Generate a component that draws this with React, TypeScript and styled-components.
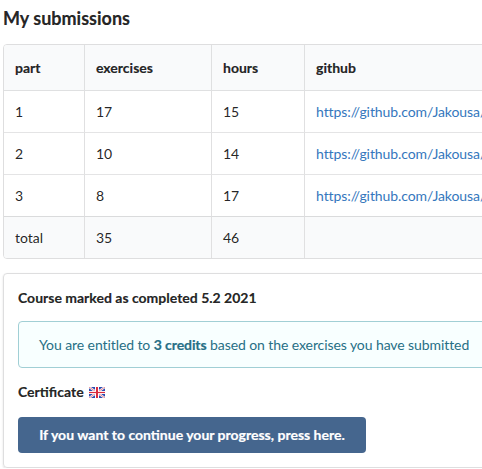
import React from 'react';
import styled, { createGlobalStyle } from 'styled-components';

const GlobalStyle = createGlobalStyle`
  *, *::before, *::after { box-sizing: border-box; }
  html, body { margin: 0; overflow: hidden; background: #fff; }
  body {
    font-family: Lato, 'Open Sans', sans-serif;
    font-size: 14px;
    line-height: 20px;
    color: rgba(0, 0, 0, 0.87);
    -webkit-font-smoothing: antialiased;
  }
  h3, h4, th, strong, button { -webkit-text-stroke: 0.2px currentColor; }
`;

const Page = styled.main`
  width: 900px;
  padding: 6px 0 0 3px;
`;

const Title = styled.h3`
  margin: 0 0 14px;
  font-size: 18px;
  font-weight: 700;
  line-height: 24px;
`;

const Table = styled.table`
  width: 860px;
  table-layout: fixed;
  border-collapse: separate;
  border-spacing: 0;
  border: 1px solid #dededf;
  border-radius: 4px;
  overflow: hidden;
`;

const Column = styled.col<{ $width?: number }>`
  width: ${({ $width }) => ($width ? `${$width}px` : 'auto')};
`;

const HeaderCell = styled.th`
  height: 46px;
  padding: 0 11px;
  text-align: left;
  font-weight: 700;
  background: #f9fafb;
  border-bottom: 1px solid #dfe0e1;
  & + & { border-left: 1px solid #dfe0e1; }
`;

const Cell = styled.td`
  height: 42px;
  padding: 0 11px;
  white-space: nowrap;
  border-top: 1px solid #e4e4e5;
  & + & { border-left: 1px solid #e0e0e1; }
`;

const Body = styled.tbody`
  tr:first-child ${Cell} {
    height: 41px;
    border-top: 0;
  }
`;

const FooterCell = styled(Cell)`
  background: #f9fafb;
  border-top-color: #dadbdc;
`;

const Link = styled.a`
  color: #3577bd;
  text-decoration: none;
  letter-spacing: -0.085px;
`;

const Segment = styled.section`
  width: 860px;
  height: 195px;
  margin-top: 14px;
  padding: 14px;
  border: 1px solid #dededf;
  border-radius: 4px;
  box-shadow: 0 1px 2px rgba(34, 36, 38, 0.15);
`;

const Heading = styled.h4`
  display: flex;
  align-items: center;
  gap: 5px;
  height: 20px;
  margin: 0;
  font-size: 14px;
  font-weight: 700;
`;

const Message = styled.div`
  height: 47px;
  margin: 13px 0 14px;
  padding: 13px 20px;
  color: #276f86;
  background: #f8ffff;
  border: 1px solid #a1cfd5;
  border-radius: 4px;
  letter-spacing: -0.085px;
`;

const Button = styled.button`
  display: block;
  width: 348px;
  height: 36px;
  margin-top: 15px;
  padding: 0 21px;
  border: 0;
  border-radius: 4px;
  background: #45668e;
  color: #fff;
  font: 700 14px/14px Lato, sans-serif;
  white-space: nowrap;
`;

const Flag = styled.svg`
  display: block;
  width: 16px;
  height: 11px;
`;

function UnitedKingdomFlag() {
  return (
    <Flag viewBox="0 0 16 11" aria-label="United Kingdom">
      <rect width="16" height="11" fill="#2a4bb0" />
      <path d="M0 0 16 11M16 0 0 11" stroke="#fff" strokeWidth="2.2" />
      <path d="M0 0 16 11M16 0 0 11" stroke="#dc5160" strokeWidth="0.7" />
      <path d="M8 0v11" stroke="#fff" strokeWidth="4" />
      <path d="M0 5.5h16" stroke="#fff" strokeWidth="3" />
      <path d="M8 0v11" stroke="#d92c3f" strokeWidth="2" />
      <path d="M0 5.5h16" stroke="#d92c3f" strokeWidth="1.2" />
    </Flag>
  );
}

const repository = 'https://github.com/Jakousa/fullstack-open';

const submissions = [
  { part: 1, exercises: 17, hours: 15 },
  { part: 2, exercises: 10, hours: 14 },
  { part: 3, exercises: 8, hours: 17 },
];

export default function App() {
  return (
    <>
      <GlobalStyle />
      <Page>
        <Title>My submissions</Title>
        <Table>
          <colgroup>
            <Column $width={80} />
            <Column $width={127} />
            <Column $width={93} />
            <Column />
          </colgroup>
          <thead>
            <tr>
              <HeaderCell>part</HeaderCell>
              <HeaderCell>exercises</HeaderCell>
              <HeaderCell>hours</HeaderCell>
              <HeaderCell>github</HeaderCell>
            </tr>
          </thead>
          <Body>
            {submissions.map(({ part, exercises, hours }) => (
              <tr key={part}>
                <Cell>{part}</Cell>
                <Cell>{exercises}</Cell>
                <Cell>{hours}</Cell>
                <Cell><Link href={repository}>{repository}</Link></Cell>
              </tr>
            ))}
          </Body>
          <tfoot>
            <tr>
              <FooterCell>total</FooterCell>
              <FooterCell>35</FooterCell>
              <FooterCell>46</FooterCell>
              <FooterCell />
            </tr>
          </tfoot>
        </Table>
        <Segment>
          <Heading>Course marked as completed 5.2 2021</Heading>
          <Message>
            You are entitled to <strong>3 credits</strong> based on the exercises you have submitted
          </Message>
          <Heading>Certificate <UnitedKingdomFlag /></Heading>
          <Button type="button">If you want to continue your progress, press here.</Button>
        </Segment>
      </Page>
    </>
  );
}
